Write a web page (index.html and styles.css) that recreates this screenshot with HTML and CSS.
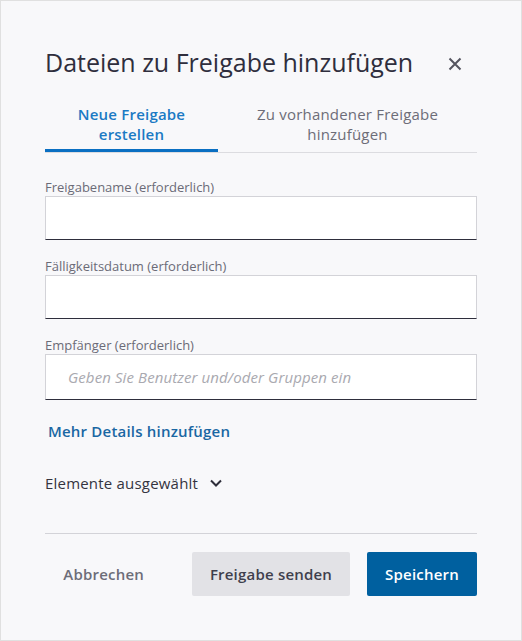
FILE: index.html
```html
<!DOCTYPE html>
<html lang="de">
<head>
<meta charset="utf-8">
<link rel="stylesheet" href="styles.css">
</head>
<body>
<div class="dialog">
  <div class="header">
    <h1 class="title">Dateien zu Freigabe hinzufügen</h1>
    <button class="close" aria-label="Schließen">
      <svg width="14" height="14" viewBox="0 0 14 14"><path d="M1.5 1.5L12.5 12.5M12.5 1.5L1.5 12.5" stroke="#55555f" stroke-width="2" fill="none"/></svg>
    </button>
  </div>
  <div class="tabs">
    <div class="tab active">Neue Freigabe<br>erstellen</div>
    <div class="tab">Zu vorhandener Freigabe<br>hinzufügen</div>
  </div>
  <div class="field first">
    <label class="label">Freigabename (erforderlich)</label>
    <div class="input"></div>
  </div>
  <div class="field">
    <label class="label">Fälligkeitsdatum (erforderlich)</label>
    <div class="input"></div>
  </div>
  <div class="field">
    <label class="label">Empfänger (erforderlich)</label>
    <div class="input placeholder">Geben Sie Benutzer und/oder Gruppen ein</div>
  </div>
  <a class="more">Mehr Details hinzufügen</a>
  <div class="selected">
    <span>Elemente ausgewählt</span>
    <svg width="14" height="10" viewBox="0 0 14 10"><path d="M2 2.5L7 7.5L12 2.5" stroke="#2e2e3a" stroke-width="2" fill="none"/></svg>
  </div>
  <div class="footer">
    <button class="btn cancel">Abbrechen</button>
    <button class="btn secondary">Freigabe senden</button>
    <button class="btn primary">Speichern</button>
  </div>
</div>
</body>
</html>
```
FILE: styles.css
```css
* { box-sizing: border-box; }
html, body { margin: 0; padding: 0; }
body {
  font-family: "Open Sans", "Noto Sans", sans-serif;
  background: #f8f8fa;
}
.dialog {
  width: 522px;
  height: 641px;
  border: 1px solid #e0e0e0;
  background: #f8f8fa;
  padding: 0 44px;
  display: flex;
  flex-direction: column;
}
.header {
  display: flex;
  align-items: center;
  justify-content: space-between;
  padding-top: 45px;
}
.title {
  margin: 0;
  font-size: 25px;
  font-weight: 400;
  line-height: 32px;
  color: #2f2e3d;
}
.close {
  border: 0;
  background: none;
  padding: 0;
  margin-right: 15px;
  margin-top: 4px;
  width: 14px;
  height: 14px;
  display: flex;
}
.tabs {
  display: flex;
  margin-top: 21px;
  border-bottom: 1px solid #dcdce0;
}
.tab {
  text-align: center;
  font-size: 15px;
  line-height: 20px;
  letter-spacing: 0.2px;
  color: #6d6d78;
  padding: 5px 0 5px;
  flex: 1;
  border-bottom: 3px solid transparent;
}
.tab.active {
  flex: 0 0 173px;
  color: #1b7ac4;
  font-weight: 600;
  border-bottom-color: #0a6fc2;
}
.field { display: flex; flex-direction: column; margin-top: 18px; }
.field.first { margin-top: 26px; }
.label {
  font-size: 13px;
  line-height: 16px;
  color: #6b6b77;
  margin-bottom: 1px;
}
.input {
  height: 44px;
  background: #fff;
  border: 1px solid #d3d3d8;
  border-bottom: 1px solid #2e2e3c;
}
.input.placeholder {
  height: 46px;
  font-style: italic;
  font-size: 15px;
  letter-spacing: 0.1px;
  color: #a9a9b0;
  padding-left: 22px;
  display: flex;
  align-items: center;
}
.more {
  margin-top: 20px;
  font-size: 15px;
  font-weight: 600;
  line-height: 22px;
  letter-spacing: 0.2px;
  color: #1a67a3;
  padding-left: 3px;
}
.selected {
  margin-top: 30px;
  display: flex;
  align-items: center;
  gap: 11px;
  font-size: 15px;
  line-height: 22px;
  letter-spacing: 0.2px;
  color: #34343f;
}
.footer {
  margin-top: 39px;
  border-top: 1px solid #d3d3d8;
  padding-top: 18px;
  display: flex;
  justify-content: flex-end;
  gap: 17px;
}
.btn {
  font-family: inherit;
  font-size: 15px;
  font-weight: 600;
  letter-spacing: 0.2px;
  white-space: nowrap;
  height: 44px;
  border: 0;
  border-radius: 2px;
  padding: 0 18px;
}
.cancel {
  background: none;
  color: #6d6d78;
  margin-right: 13px;
}
.secondary {
  background: #e2e2e6;
  color: #3f3f4d;
  width: 158px;
  padding: 0;
}
.primary {
  background: #00609f;
  color: #fff;
  width: 110px;
  padding: 0;
}
```
